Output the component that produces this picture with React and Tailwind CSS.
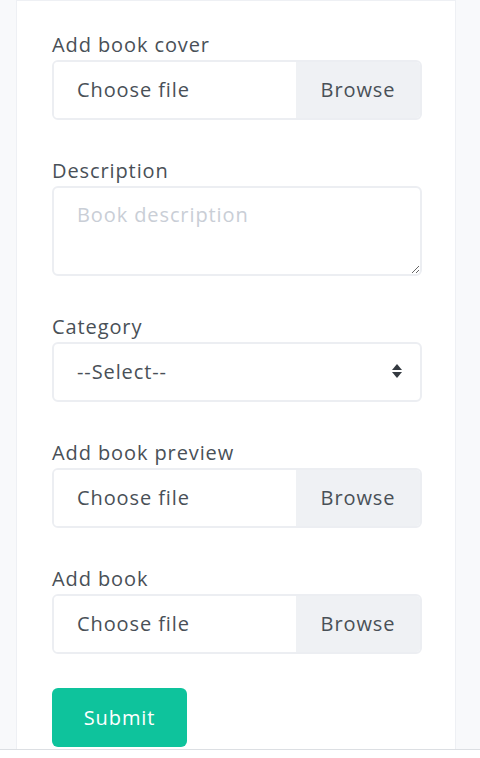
import React from "react";

const font = { fontFamily: '"Open Sans", "Noto Sans", sans-serif', letterSpacing: "0.9px" };

function FileField({ label, last }) {
  return (
    <div className={last ? "mb-[34px]" : "mb-9"}>
      <label className="block text-[20px] leading-[30px] text-[#495057]">{label}</label>
      <div className="flex h-[60px] rounded-md border-2 border-[#eceef2] overflow-hidden">
        <div className="flex-1 flex items-center pl-[23px] text-[20px] text-[#495057] bg-white">
          Choose file
        </div>
        <div className="w-[124px] flex items-center justify-center bg-[#eff1f4] text-[20px] text-[#495057]">
          Browse
        </div>
      </div>
    </div>
  );
}

export default function App() {
  return (
    <div className="h-[758px] flex flex-col bg-[#f8f9fb] overflow-hidden" style={font}>
      <div className="h-[749px] px-4 overflow-hidden">
        <div className="w-[440px] h-full bg-white border border-[#eef0f4] border-b-0 pl-[35px] pr-[33px] pt-[29px]">
          <FileField label="Add book cover" />

          <div className="mb-9">
            <label className="block text-[20px] leading-[30px] text-[#495057]">Description</label>
            <textarea
              placeholder="Book description"
              className="block w-full h-[90px] rounded-md border-2 border-[#eceef2] px-[23px] py-[12px] text-[20px] text-[#495057] placeholder:text-[#c9ced6] outline-none"
            />
          </div>

          <div className="mb-9">
            <label className="block text-[20px] leading-[30px] text-[#495057]">Category</label>
            <div className="relative">
              <select className="block w-full h-[60px] appearance-none rounded-md border-2 border-[#eceef2] bg-white pl-[23px] text-[20px] text-[#495057] outline-none">
                <option>--Select--</option>
              </select>
              <svg
                className="absolute right-[19px] top-[21px] pointer-events-none"
                width="12"
                height="16"
                viewBox="0 0 12 16"
              >
                <path d="M6 1 L11 7 H1 Z" fill="#343a40" />
                <path d="M6 15 L11 9 H1 Z" fill="#343a40" />
              </svg>
            </div>
          </div>

          <FileField label="Add book preview" />
          <FileField label="Add book" last />

          <button className="w-[135px] h-[59px] rounded-md bg-[#0ec39c] text-white text-[20px]">
            Submit
          </button>
        </div>
      </div>
      <div className="flex-1 bg-white border-t border-[#dcdfe3]" />
    </div>
  );
}
